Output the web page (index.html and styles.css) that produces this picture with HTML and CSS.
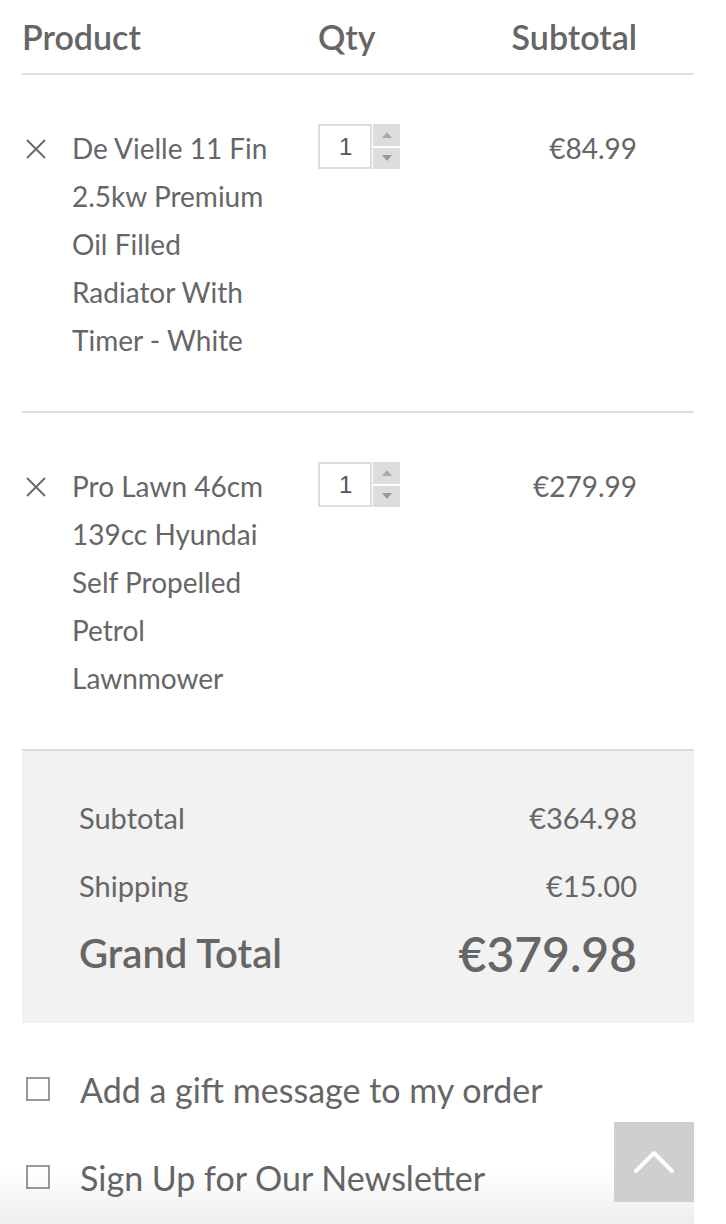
FILE: index.html
```html
<!DOCTYPE html>
<html lang="en">
<head>
<meta charset="utf-8">
<title>Cart</title>
<link rel="stylesheet" href="styles.css">
</head>
<body>
<div class="cart">
  <div class="cart-head">
    <div class="col-product">Product</div>
    <div class="col-qty">Qty</div>
    <div class="col-sub">Subtotal</div>
  </div>

  <div class="cart-row">
    <div class="col-product item">
      <span class="remove"><svg width="20" height="20" viewBox="0 0 20 20"><path d="M1 1L19 19M19 1L1 19" stroke="#666" stroke-width="1.8" fill="none"/></svg></span>
      <span class="name">De Vielle 11 Fin 2.5kw Premium Oil Filled Radiator With Timer - White</span>
    </div>
    <div class="col-qty">
      <div class="qty">
        <input class="qty-input" type="text" value="1">
        <div class="spin"><span class="up"></span><span class="down"></span></div>
      </div>
    </div>
    <div class="col-sub price">€84.99</div>
  </div>

  <div class="cart-row">
    <div class="col-product item">
      <span class="remove"><svg width="20" height="20" viewBox="0 0 20 20"><path d="M1 1L19 19M19 1L1 19" stroke="#666" stroke-width="1.8" fill="none"/></svg></span>
      <span class="name">Pro Lawn 46cm 139cc Hyundai Self Propelled Petrol Lawnmower</span>
    </div>
    <div class="col-qty">
      <div class="qty">
        <input class="qty-input" type="text" value="1">
        <div class="spin"><span class="up"></span><span class="down"></span></div>
      </div>
    </div>
    <div class="col-sub price">€279.99</div>
  </div>

  <div class="totals">
    <div class="t-row"><span>Subtotal</span><span>€364.98</span></div>
    <div class="t-row"><span>Shipping</span><span>€15.00</span></div>
    <div class="t-row grand"><span>Grand Total</span><span class="grand-amt">€379.98</span></div>
  </div>

  <div class="options">
    <label class="opt"><span class="box"></span><span>Add a gift message to my order</span></label>
    <label class="opt"><span class="box"></span><span>Sign Up for Our Newsletter</span></label>
  </div>
</div>

<div class="bottom-shade"></div>
<a class="to-top" href="#"><svg width="44" height="26" viewBox="0 0 44 26"><path d="M4 22L22 4L40 22" stroke="#fff" stroke-width="4" stroke-linecap="round" stroke-linejoin="round" fill="none"/></svg></a>
</body>
</html>
```

FILE: styles.css
```css
html, body {
  margin: 0;
  padding: 0;
  background: #fff;
}
body {
  font-family: "Lato", "Open Sans", sans-serif;
  color: #666;
  overflow: hidden;
  height: 1224px;
}
.cart {
  margin: 0 32px 0 22px;
}
.cart-head, .cart-row {
  display: grid;
  grid-template-columns: 296px 1fr 180px;
  padding-right: 57px;
  border-bottom: 2px solid #ddd;
}
.cart-head {
  height: 73px;
  align-items: center;
  font-size: 34px;
  font-weight: 600;
}
.col-sub {
  text-align: right;
}
.cart-row {
  padding-top: 49px;
  padding-bottom: 47px;
  font-size: 28px;
  line-height: 48px;
}
.item {
  display: flex;
}
.remove {
  width: 50px;
  flex: none;
  padding-left: 4px;
  box-sizing: border-box;
  padding-top: 15px;
  height: 48px;
}
.remove svg { display: block; }
.name {
  width: 212px;
}
.qty {
  display: flex;
  align-items: stretch;
  height: 45px;
}
.qty-input {
  width: 54px;
  height: 45px;
  box-sizing: border-box;
  border: 2px solid #ddd;
  margin: 0;
  padding: 0 0 0 19px;
  font-family: "Liberation Sans", Arial, sans-serif;
  font-size: 24px;
  color: #555;
  outline: none;
}
.spin {
  width: 27px;
  margin-left: 1px;
  display: flex;
  flex-direction: column;
  gap: 2px;
}
.spin span {
  flex: 1;
  background: #ddd;
  position: relative;
}
.spin span::after {
  content: "";
  position: absolute;
  left: 50%;
  top: 50%;
  margin-left: -5px;
  margin-top: -3px;
  border-left: 5px solid transparent;
  border-right: 5px solid transparent;
}
.spin .up::after { border-bottom: 6px solid #aaa; }
.spin .down::after { border-top: 6px solid #999; }
.totals {
  background: #f2f2f2;
  padding: 42px 57px 46px 57px;
  display: flex;
  flex-direction: column;
  gap: 20px;
}
.t-row {
  display: flex;
  justify-content: space-between;
  align-items: center;
  height: 48px;
  font-size: 29px;
}
.t-row.grand {
  font-size: 40px;
  font-weight: 600;
}
.grand-amt {
  font-size: 48px;
}
.options {
  padding-top: 42px;
  display: flex;
  flex-direction: column;
  gap: 40px;
}
.opt {
  display: flex;
  align-items: center;
  height: 48px;
  font-size: 34px;
}
.box {
  width: 24px;
  height: 24px;
  box-sizing: border-box;
  border: 2px solid #999;
  margin-left: 4px;
  margin-right: 30px;
  flex: none;
}
.bottom-shade {
  position: fixed;
  left: 0;
  bottom: 0;
  width: 694px;
  height: 52px;
  background: linear-gradient(to bottom, rgba(0,0,0,0), rgba(0,0,0,0.07));
  pointer-events: none;
}
.to-top {
  position: fixed;
  right: 32px;
  bottom: 22px;
  width: 80px;
  height: 80px;
  background: #cfcfcf;
  display: flex;
  align-items: center;
  justify-content: center;
}
.to-top svg { display: block; }
```
